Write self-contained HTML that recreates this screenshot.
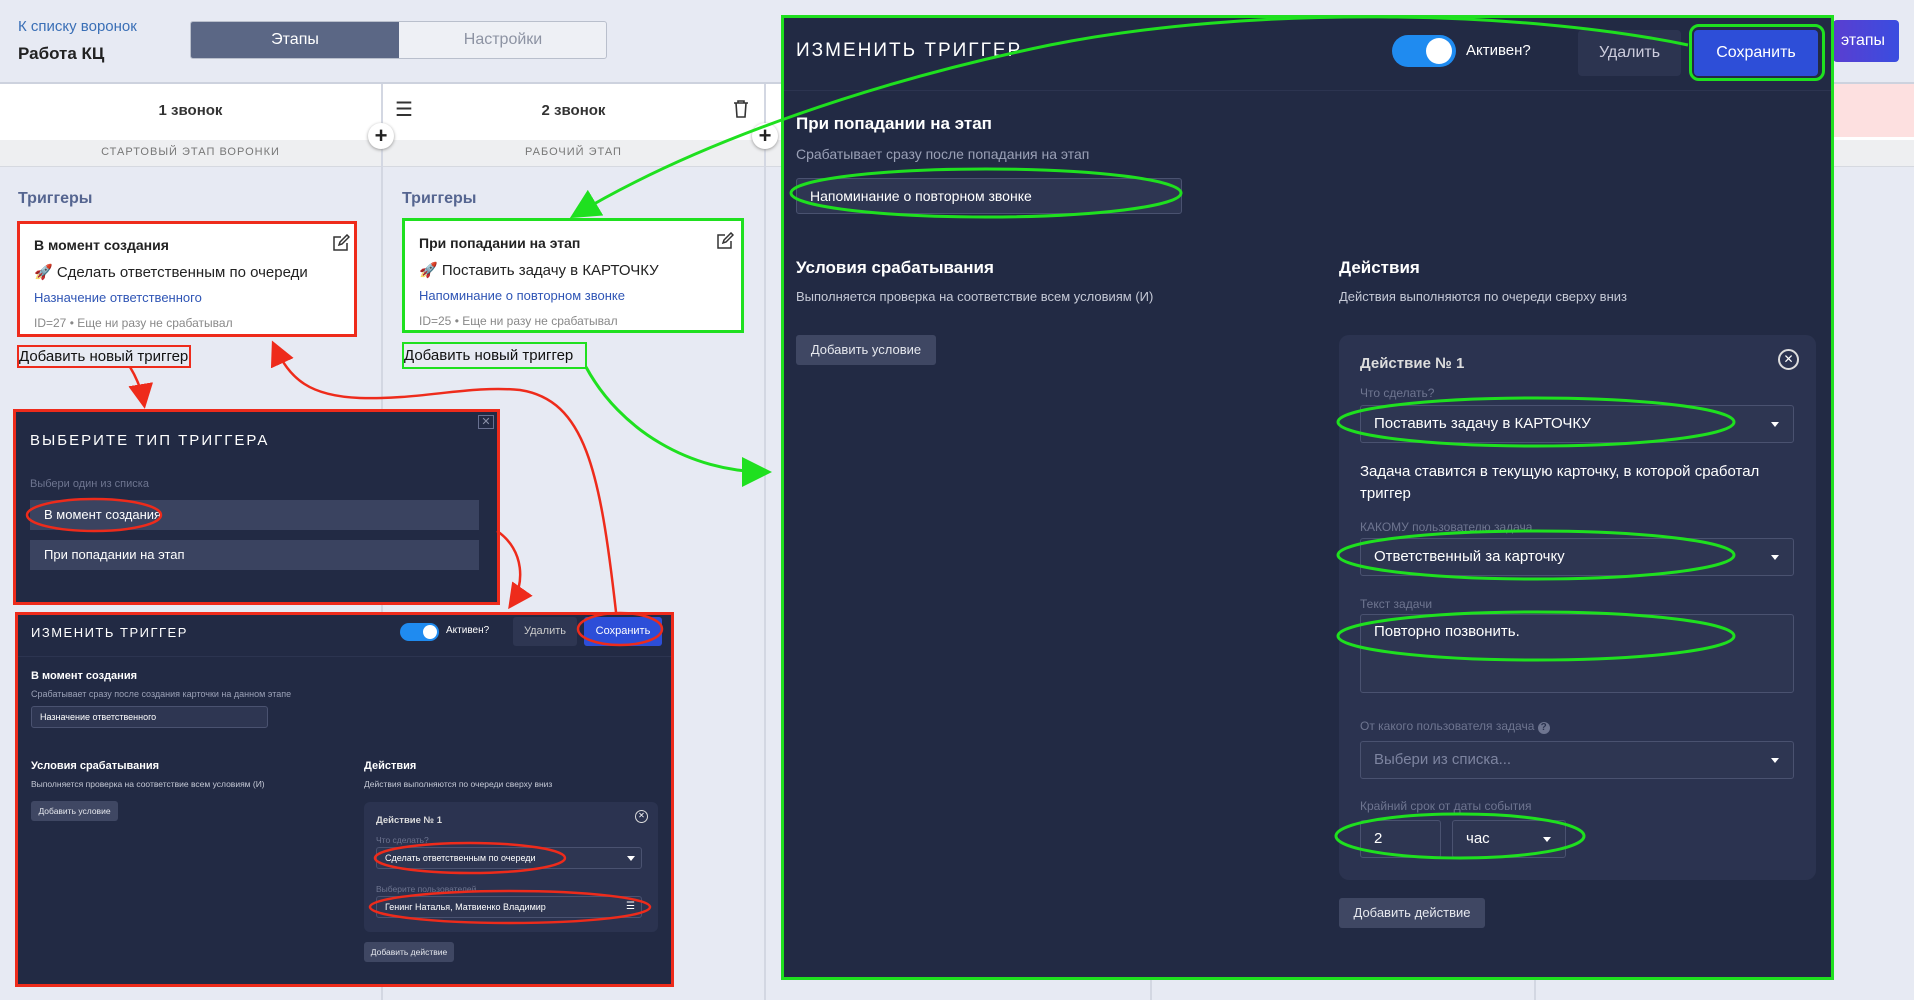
<!DOCTYPE html>
<html><head><meta charset="utf-8"><style>
*{box-sizing:border-box;margin:0;padding:0}
body{width:1914px;height:1000px;background:#e7eaf3;font-family:"Liberation Sans","Noto Sans CJK SC",sans-serif;position:relative;overflow:hidden;color:#222}
.a{position:absolute}
.dk{background:#222a44;color:#fff}
.in{position:absolute;background:#2e3652;border:1px solid #4a5270;border-radius:3px;color:#fff}
.btn{position:absolute;background:#3f4763;color:#e6e8ee;border-radius:3px;text-align:center}
.lbl{position:absolute;color:#6e7590}
.car{position:absolute;right:14px;top:50%;margin-top:-2px;border-left:4px solid transparent;border-right:4px solid transparent;border-top:5px solid #fff}
</style></head><body>

<div class="a" style="left:18px;top:18px;font-size:15px;color:#3a6fb6">К списку воронок</div>
<div class="a" style="left:18px;top:44px;font-size:17px;font-weight:bold;color:#222">Работа КЦ</div>
<div class="a" style="left:190px;top:21px;width:417px;height:38px;border:1px solid #b9bfcc;border-radius:3px;background:#eef0f5;overflow:hidden">
 <div class="a" style="left:0;top:0;width:208px;height:38px;background:#5b6785;color:#fff;font-size:16px;text-align:center;line-height:36px">Этапы</div>
 <div class="a" style="left:208px;top:0;width:208px;height:38px;color:#8d93a3;font-size:16px;text-align:center;line-height:36px">Настройки</div>
</div>
<div class="a" style="left:0;top:82px;width:1914px;height:2px;background:#cdd2de"></div>

<div class="a" style="left:0;top:84px;width:1914px;height:56px;background:#fff"></div>
<div class="a" style="left:1832px;top:84px;width:82px;height:53px;background:#fde0e0"></div>
<div class="a" style="left:0;top:140px;width:1914px;height:27px;background:#eeeff1;border-bottom:1px solid #d6d9e0"></div>
<div class="a" style="left:381px;top:84px;width:2px;height:916px;background:#d3d7e2"></div>
<div class="a" style="left:764px;top:84px;width:2px;height:916px;background:#d3d7e2"></div>
<div class="a" style="left:1150px;top:84px;width:2px;height:916px;background:#d3d7e2"></div>
<div class="a" style="left:1534px;top:84px;width:2px;height:916px;background:#d3d7e2"></div>

<div class="a" style="left:0;top:102px;width:381px;text-align:center;font-size:15px;font-weight:bold;color:#333">1 звонок</div>
<div class="a" style="left:383px;top:102px;width:381px;text-align:center;font-size:15px;font-weight:bold;color:#333">2 звонок</div>
<div class="a" style="left:395px;top:97px;font-size:20px;color:#333">☰</div>
<svg class="a" style="left:733px;top:99px" width="16" height="20" viewBox="0 0 16 20"><path d="M1 4h14M5 4V2h6v2M3 4l1 14h8l1-14" fill="none" stroke="#333" stroke-width="1.6"/></svg>
<div class="a" style="left:0;top:146px;width:381px;text-align:center;font-size:11px;letter-spacing:1px;color:#777">СТАРТОВЫЙ ЭТАП ВОРОНКИ</div>
<div class="a" style="left:383px;top:146px;width:381px;text-align:center;font-size:11px;letter-spacing:1px;color:#777">РАБОЧИЙ ЭТАП</div>
<div class="a" style="left:368px;top:123px;width:26px;height:26px;border-radius:13px;background:#fff;box-shadow:0 1px 3px #999;text-align:center;font-size:22px;line-height:25px;font-weight:bold;color:#222">+</div>
<div class="a" style="left:752px;top:123px;width:26px;height:26px;border-radius:13px;background:#fff;box-shadow:0 1px 3px #999;text-align:center;font-size:22px;line-height:25px;font-weight:bold;color:#222">+</div>
<div class="a" style="left:1833px;top:20px;width:66px;height:42px;border-radius:4px;background:linear-gradient(90deg,#5a3ed0,#3a4de0);color:#fff;font-size:16px;line-height:42px;padding-left:8px">этапы</div>

<div class="a" style="left:18px;top:190px;font-size:16px;font-weight:bold;color:#556590">Триггеры</div>
<div class="a" style="left:402px;top:190px;font-size:16px;font-weight:bold;color:#556590">Триггеры</div>

<div class="a" style="left:17px;top:221px;width:340px;height:116px;background:#fff;border:3px solid #ee2b1b">
 <div class="a" style="left:14px;top:13px;font-size:14px;font-weight:bold">В момент создания</div>
 <div class="a" style="left:14px;top:39px;font-size:15px">🚀 Сделать ответственным по очереди</div>
 <div class="a" style="left:14px;top:66px;font-size:13px;color:#2f55b5">Назначение ответственного</div>
 <div class="a" style="left:14px;top:92px;font-size:12px;color:#888">ID=27 • Еще ни разу не срабатывал</div>
 <svg class="a" style="left:312px;top:10px" width="18" height="18" viewBox="0 0 18 18"><path d="M9 3H2v13h13V9M7 11l1-3 7-7 2 2-7 7z" fill="none" stroke="#333" stroke-width="1.5"/></svg>
</div>
<div class="a" style="left:402px;top:218px;width:342px;height:115px;background:#fff;border:3px solid #1fe01f">
 <div class="a" style="left:14px;top:14px;font-size:14px;font-weight:bold">При попадании на этап</div>
 <div class="a" style="left:14px;top:40px;font-size:15px">🚀 Поставить задачу в КАРТОЧКУ</div>
 <div class="a" style="left:14px;top:67px;font-size:13px;color:#2f55b5">Напоминание о повторном звонке</div>
 <div class="a" style="left:14px;top:93px;font-size:12px;color:#888">ID=25 • Еще ни разу не срабатывал</div>
 <svg class="a" style="left:311px;top:11px" width="18" height="18" viewBox="0 0 18 18"><path d="M9 3H2v13h13V9M7 11l1-3 7-7 2 2-7 7z" fill="none" stroke="#333" stroke-width="1.5"/></svg>
</div>
<div class="a" style="left:17px;top:345px;width:174px;height:23px;border:2px solid #ee2b1b;font-size:15px;line-height:19px;color:#111">Добавить новый триггер</div>
<div class="a" style="left:402px;top:342px;width:185px;height:27px;border:2px solid #1fe01f;font-size:15px;line-height:23px;color:#111">Добавить новый триггер</div>

<div class="a dk" style="left:13px;top:409px;width:487px;height:196px;border:3px solid #ee2b1b">
 <div class="a" style="left:14px;top:20px;font-size:15px;letter-spacing:2px">ВЫБЕРИТЕ ТИП ТРИГГЕРА</div>
 <div class="a" style="left:462px;top:3px;width:16px;height:14px;border:1px solid #687090;color:#8a90a8;font-size:11px;text-align:center;line-height:12px">✕</div>
 <div class="a" style="left:14px;top:66px;font-size:11px;color:#6e7590">Выбери один из списка</div>
 <div class="a" style="left:14px;top:88px;width:449px;height:30px;background:#3a4360;font-size:13px;line-height:30px;padding-left:14px">В момент создания</div>
 <div class="a" style="left:14px;top:128px;width:449px;height:30px;background:#3a4360;font-size:13px;line-height:30px;padding-left:14px">При попадании на этап</div>
</div>

<div class="a dk" style="left:15px;top:612px;width:659px;height:375px;border:3px solid #ee2b1b">
 <div class="a" style="left:13px;top:10px;font-size:13px;letter-spacing:1.5px">ИЗМЕНИТЬ ТРИГГЕР</div>
 <div class="a" style="left:382px;top:8px;width:39px;height:18px;border-radius:9px;background:#1f8bf0"><div class="a" style="right:2px;top:2px;width:14px;height:14px;border-radius:7px;background:#fff"></div></div>
 <div class="a" style="left:428px;top:10px;font-size:10px">Активен?</div>
 <div class="a" style="left:495px;top:2px;width:64px;height:29px;background:#2e3652;border-radius:3px;font-size:11px;line-height:29px;text-align:center;color:#ccc">Удалить</div>
 <div class="a" style="left:566px;top:2px;width:78px;height:29px;background:#2d4ed8;border-radius:3px;font-size:11px;line-height:29px;text-align:center">Сохранить</div>
 <div class="a" style="left:0;top:41px;width:653px;height:1px;background:#2c3450"></div>
 <div class="a" style="left:13px;top:55px;font-size:11px;font-weight:bold">В момент создания</div>
 <div class="a" style="left:13px;top:74px;font-size:9px;color:#9aa0b6">Срабатывает сразу после создания карточки на данном этапе</div>
 <div class="in" style="left:13px;top:91px;width:237px;height:22px;font-size:9px;line-height:20px;padding-left:8px">Назначение ответственного</div>
 <div class="a" style="left:13px;top:145px;font-size:11px;font-weight:bold">Условия срабатывания</div>
 <div class="a" style="left:13px;top:164px;font-size:8.5px;color:#c5c9d6">Выполняется проверка на соответствие всем условиям (И)</div>
 <div class="btn" style="left:13px;top:186px;width:87px;height:20px;font-size:8.5px;line-height:20px">Добавить условие</div>
 <div class="a" style="left:346px;top:145px;font-size:11px;font-weight:bold">Действия</div>
 <div class="a" style="left:346px;top:164px;font-size:8.5px;color:#c5c9d6">Действия выполняются по очереди сверху вниз</div>
 <div class="a" style="left:346px;top:187px;width:294px;height:130px;background:#2b3350;border-radius:6px">
  <div class="a" style="left:12px;top:13px;font-size:9.5px;font-weight:bold;color:#ddd">Действие № 1</div>
  <div class="a" style="left:271px;top:8px;width:13px;height:13px;border:1.5px solid #ddd;border-radius:7px;font-size:8px;line-height:10px;text-align:center">✕</div>
  <div class="lbl" style="left:12px;top:33px;font-size:8.5px">Что сделать?</div>
  <div class="in" style="left:12px;top:45px;width:266px;height:22px;font-size:9px;line-height:20px;padding-left:8px">Сделать ответственным по очереди<span class="car" style="right:6px"></span></div>
  <div class="lbl" style="left:12px;top:82px;font-size:8.5px">Выберите пользователей</div>
  <div class="in" style="left:12px;top:94px;width:266px;height:22px;font-size:9px;line-height:20px;padding-left:8px">Генинг Наталья, Матвиенко Владимир<span class="a" style="right:6px;top:0;font-size:10px">☰</span></div>
 </div>
 <div class="btn" style="left:346px;top:327px;width:90px;height:20px;font-size:8.5px;line-height:20px">Добавить действие</div>
</div>

<div class="a dk" style="left:781px;top:15px;width:1053px;height:965px;border:3px solid #1fe01f">
 <div class="a" style="left:12px;top:22px;font-size:19px;letter-spacing:2px">ИЗМЕНИТЬ ТРИГГЕР</div>
 <div class="a" style="left:608px;top:17px;width:64px;height:32px;border-radius:16px;background:#1f8bf0"><div class="a" style="right:4px;top:3px;width:26px;height:26px;border-radius:13px;background:#fff"></div></div>
 <div class="a" style="left:682px;top:24px;font-size:15px">Активен?</div>
 <div class="a" style="left:794px;top:12px;width:103px;height:46px;background:#2c3450;border-radius:4px;font-size:16px;line-height:46px;text-align:center;color:#ccd">Удалить</div>
 <div class="a" style="left:910px;top:12px;width:124px;height:46px;background:#2d4ed8;border-radius:4px;font-size:16px;line-height:46px;text-align:center">Сохранить</div>
 <div class="a" style="left:905px;top:6px;width:136px;height:57px;border:3px solid #1fe01f;border-radius:10px"></div>
 <div class="a" style="left:0;top:72px;width:1047px;height:1px;background:#2c3450"></div>
 <div class="a" style="left:12px;top:96px;font-size:17px;font-weight:bold">При попадании на этап</div>
 <div class="a" style="left:12px;top:128px;font-size:14px;color:#9aa0b6">Срабатывает сразу после попадания на этап</div>
 <div class="in" style="left:12px;top:160px;width:386px;height:36px;font-size:14px;line-height:34px;padding-left:13px">Напоминание о повторном звонке</div>
 <div class="a" style="left:12px;top:240px;font-size:17px;font-weight:bold">Условия срабатывания</div>
 <div class="a" style="left:12px;top:271px;font-size:13px;color:#c5c9d6">Выполняется проверка на соответствие всем условиям (И)</div>
 <div class="btn" style="left:12px;top:317px;width:140px;height:30px;font-size:13px;line-height:30px">Добавить условие</div>
 <div class="a" style="left:555px;top:240px;font-size:17px;font-weight:bold">Действия</div>
 <div class="a" style="left:555px;top:271px;font-size:13px;color:#c5c9d6">Действия выполняются по очереди сверху вниз</div>
 <div class="a" style="left:555px;top:317px;width:477px;height:545px;background:#2b3350;border-radius:10px">
  <div class="a" style="left:21px;top:20px;font-size:15px;font-weight:bold;color:#ddd">Действие № 1</div>
  <div class="a" style="left:439px;top:14px;width:21px;height:21px;border:2px solid #ddd;border-radius:11px;font-size:12px;line-height:17px;text-align:center">✕</div>
  <div class="lbl" style="left:21px;top:51px;font-size:12px">Что сделать?</div>
  <div class="in" style="left:21px;top:70px;width:434px;height:38px;font-size:15px;line-height:36px;padding-left:13px">Поставить задачу в КАРТОЧКУ<span class="car"></span></div>
  <div class="a" style="left:21px;top:126px;font-size:15px;line-height:22px;width:420px">Задача ставится в текущую карточку, в которой сработал триггер</div>
  <div class="lbl" style="left:21px;top:185px;font-size:12px">КАКОМУ пользователю задача</div>
  <div class="in" style="left:21px;top:203px;width:434px;height:38px;font-size:15px;line-height:36px;padding-left:13px">Ответственный за карточку<span class="car"></span></div>
  <div class="lbl" style="left:21px;top:262px;font-size:12px">Текст задачи</div>
  <div class="in" style="left:21px;top:279px;width:434px;height:79px;font-size:15px;padding:8px 13px">Повторно позвонить.</div>
  <div class="lbl" style="left:21px;top:384px;font-size:12px">От какого пользователя задача <span style="display:inline-block;width:12px;height:12px;border-radius:6px;background:#6e7590;color:#2b3350;font-size:10px;text-align:center;line-height:12px;font-weight:bold">?</span></div>
  <div class="in" style="left:21px;top:406px;width:434px;height:38px;font-size:15px;line-height:36px;padding-left:13px;color:#7d84a0">Выбери из списка...<span class="car"></span></div>
  <div class="lbl" style="left:21px;top:464px;font-size:12px">Крайний срок от даты события</div>
  <div class="in" style="left:21px;top:485px;width:81px;height:38px;font-size:15px;line-height:36px;padding-left:13px">2</div>
  <div class="in" style="left:113px;top:485px;width:114px;height:38px;font-size:15px;line-height:36px;padding-left:13px">час<span class="car"></span></div>
 </div>
 <div class="btn" style="left:555px;top:880px;width:146px;height:30px;font-size:13px;line-height:30px">Добавить действие</div>
</div>

<svg class="a" style="left:0;top:0" width="1914" height="1000">
 <defs>
  <marker id="ar" markerWidth="10" markerHeight="10" refX="8" refY="5" orient="auto"><path d="M0 0L10 5L0 10z" fill="#ee2b1b"/></marker>
  <marker id="ag" markerWidth="10" markerHeight="10" refX="8" refY="5" orient="auto"><path d="M0 0L10 5L0 10z" fill="#1fe01f"/></marker>
 </defs>
 <g fill="none" stroke="#1fe01f" stroke-width="3">
  <ellipse cx="986" cy="193" rx="195" ry="24"/>
  <ellipse cx="1536" cy="422" rx="198" ry="24"/>
  <ellipse cx="1536" cy="555" rx="198" ry="24"/>
  <ellipse cx="1536" cy="636" rx="198" ry="24"/>
  <ellipse cx="1460" cy="836" rx="124" ry="22"/>
  <path d="M1688 45 C1520 10 1250 5 1050 45 C880 80 700 140 575 215" marker-end="url(#ag)"/>
  <path d="M586 367 C620 430 690 472 766 472" marker-end="url(#ag)"/>
 </g>
 <g fill="none" stroke="#ee2b1b" stroke-width="2.5">
  <ellipse cx="94" cy="515" rx="67" ry="16"/>
  <ellipse cx="470" cy="858" rx="95" ry="15"/>
  <ellipse cx="510" cy="907" rx="140" ry="16"/>
  <ellipse cx="620" cy="629" rx="42" ry="16"/>
  <path d="M130 367 C138 380 142 392 144 404" marker-end="url(#ar)"/>
  <path d="M616 612 C600 470 585 400 520 390 C470 385 420 400 360 398 C310 396 290 380 274 345" marker-end="url(#ar)"/>
  <path d="M497 531 C525 550 525 585 511 605" marker-end="url(#ar)"/>
 </g>
</svg>
</body></html>
